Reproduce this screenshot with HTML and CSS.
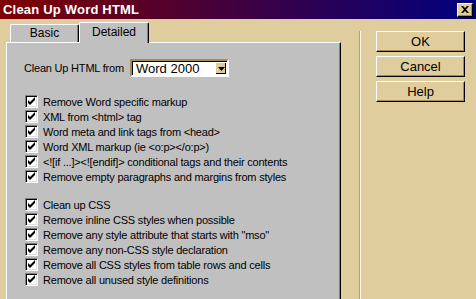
FILE: index.html
```html
<!DOCTYPE html>
<html lang="en">
<head>
    <meta charset="UTF-8">
    <title>Clean Up Word HTML</title>
    <link rel="stylesheet" href="styles.css">
</head>
<body>
<div class="titlebar">
    <span class="title">Clean Up Word HTML</span>
    <span class="close">
        <svg width="8" height="7" viewBox="0 0 8 7"><path d="M0 0h2l2 2 2-2h2L5 3.5 8 7H6L4 5 2 7H0l3-3.5z" fill="#000"/></svg>
    </span>
</div>
<div class="main">
    <div class="left">
        <div class="tabs">
            <div class="tab">Basic</div>
            <div class="tab active">Detailed</div>
        </div>
        <div class="panel">
            <div class="from-row">
                <span class="label">Clean Up HTML from</span>
                <div class="select">
                    <span class="value">Word 2000</span>
                    <span class="arrow"><svg width="7" height="4" viewBox="0 0 7 4"><path d="M0 0h7L3.5 4z" fill="#000"/></svg></span>
                </div>
            </div>
            <div class="group">
                <div class="check"><span class="box"></span>Remove Word specific markup</div>
                <div class="check"><span class="box"></span>XML from &lt;html&gt; tag</div>
                <div class="check"><span class="box"></span>Word meta and link tags from &lt;head&gt;</div>
                <div class="check"><span class="box"></span>Word XML markup (ie &lt;o:p&gt;&lt;/o:p&gt;)</div>
                <div class="check"><span class="box"></span>&lt;![if ...]&gt;&lt;![endif]&gt; conditional tags and their contents</div>
                <div class="check"><span class="box"></span>Remove empty paragraphs and margins from styles</div>
            </div>
            <div class="group">
                <div class="check"><span class="box"></span>Clean up CSS</div>
                <div class="check"><span class="box"></span>Remove inline CSS styles when possible</div>
                <div class="check"><span class="box"></span>Remove any style attribute that starts with "mso"</div>
                <div class="check"><span class="box"></span>Remove any non-CSS style declaration</div>
                <div class="check"><span class="box"></span>Remove all CSS styles from table rows and cells</div>
                <div class="check"><span class="box"></span>Remove all unused style definitions</div>
            </div>
        </div>
    </div>
    <div class="separator"></div>
    <div class="buttons">
        <button>OK</button>
        <button>Cancel</button>
        <button>Help</button>
    </div>
</div>
</body>
</html>
```

FILE: styles.css
```css
body {
    margin: 0;
    width: 476px;
    height: 299px;
    overflow: hidden;
    background-color: #e0cd9e;
    font-family: "Liberation Sans", Arial, sans-serif;
    font-size: 11px;
    letter-spacing: -0.2px;
    color: #000;
}

.titlebar {
    height: 19px;
    display: flex;
    align-items: center;
    justify-content: space-between;
    padding: 0 3px 0 3px;
    background: linear-gradient(to right, #800000, #000080);
}

.title {
    color: #fff;
    font-weight: bold;
    font-size: 13px;
    letter-spacing: 0.2px;
}

.close {
    width: 14px;
    height: 12px;
    display: flex;
    align-items: center;
    justify-content: center;
    background-color: #e0cd9e;
    border-top: 1px solid #fff;
    border-left: 1px solid #fff;
    border-right: 1px solid #000;
    border-bottom: 1px solid #000;
    box-shadow: inset -1px -1px 0 #a58c55;
}

.main {
    display: flex;
    padding-top: 3px;
}

.left {
    margin-left: 6px;
    width: 335px;
}

.tabs {
    display: flex;
    align-items: flex-end;
    padding-left: 4px;
    height: 20px;
    font-size: 12px;
    letter-spacing: 0;
}

.tab {
    background-color: #c0c0c0;
    border-top: 1px solid #fff;
    border-left: 1px solid #fff;
    border-right: 1px solid #000;
    box-shadow: inset -1px 0 0 #808080;
    border-radius: 2px 2px 0 0;
    height: 17px;
    line-height: 17px;
    text-align: center;
    width: 67px;
}

.tab.active {
    width: 68px;
    height: 20px;
    line-height: 19px;
    margin-bottom: -1px;
    position: relative;
    z-index: 1;
}

.panel {
    box-sizing: border-box;
    height: 257px;
    background-color: #c0c0c0;
    border-top: 1px solid #fff;
    border-left: 1px solid #fff;
    border-right: 1px solid #000;
    box-shadow: inset -1px 0 0 #808080;
    padding: 16px 0 0 17px;
}

.from-row {
    display: flex;
    align-items: center;
    height: 18px;
}

.label {
    width: 106px;
    white-space: nowrap;
}

.select {
    width: 95px;
    height: 14px;
    display: flex;
    justify-content: space-between;
    background-color: #fff;
    border: 2px solid;
    border-color: #a58c55 #fff #fff #a58c55;
    box-shadow: inset 1px 1px 0 #000;
}

.value {
    padding: 1px 0 0 4px;
    line-height: 13px;
    font-size: 13px;
    letter-spacing: 0;
}

.arrow {
    width: 11px;
    height: 12px;
    margin: 1px 1px 0 0;
    display: flex;
    align-items: center;
    justify-content: center;
    background-color: #e0cd9e;
    border-top: 1px solid #fff;
    border-left: 1px solid #fff;
    box-shadow: inset -1px -1px 0 #000;
    box-sizing: border-box;
}

.group {
    margin-top: 17px;
}

.group + .group {
    margin-top: 13px;
}

.check {
    display: flex;
    align-items: center;
    height: 15px;
    white-space: nowrap;
}

.box {
    width: 13px;
    height: 13px;
    box-sizing: border-box;
    margin: 0 5px 0 1px;
    background-color: #fff;
    border-top: 1px solid #808080;
    border-left: 1px solid #808080;
    border-right: 1px solid #fff;
    border-bottom: 1px solid #fff;
    box-shadow: inset 1px 1px 0 #000, inset -1px -1px 0 #dfdfdf;
    background-image: url("data:image/svg+xml,%3Csvg xmlns='http://www.w3.org/2000/svg' width='11' height='11'%3E%3Cpath d='M2 4v3l2 2 5-5V1L4 6z' fill='%23000'/%3E%3C/svg%3E");
    background-repeat: no-repeat;
}

.separator {
    margin: 9px 0 0 18px;
    width: 1px;
    border-left: 1px solid #b8a270;
    background-color: #fff8e6;
    height: 268px;
}

.buttons {
    margin: 9px 0 0 15px;
    display: flex;
    flex-direction: column;
    gap: 4px;
}

button {
    width: 89px;
    height: 21px;
    padding: 0;
    font-family: "Liberation Sans", Arial, sans-serif;
    font-size: 13px;
    color: #000;
    background-color: #e0cd9e;
    border-top: 1px solid #fff;
    border-left: 1px solid #fff;
    border-right: 1px solid #000;
    border-bottom: 1px solid #000;
    box-shadow: inset -1px -1px 0 #a58c55;
}
```
